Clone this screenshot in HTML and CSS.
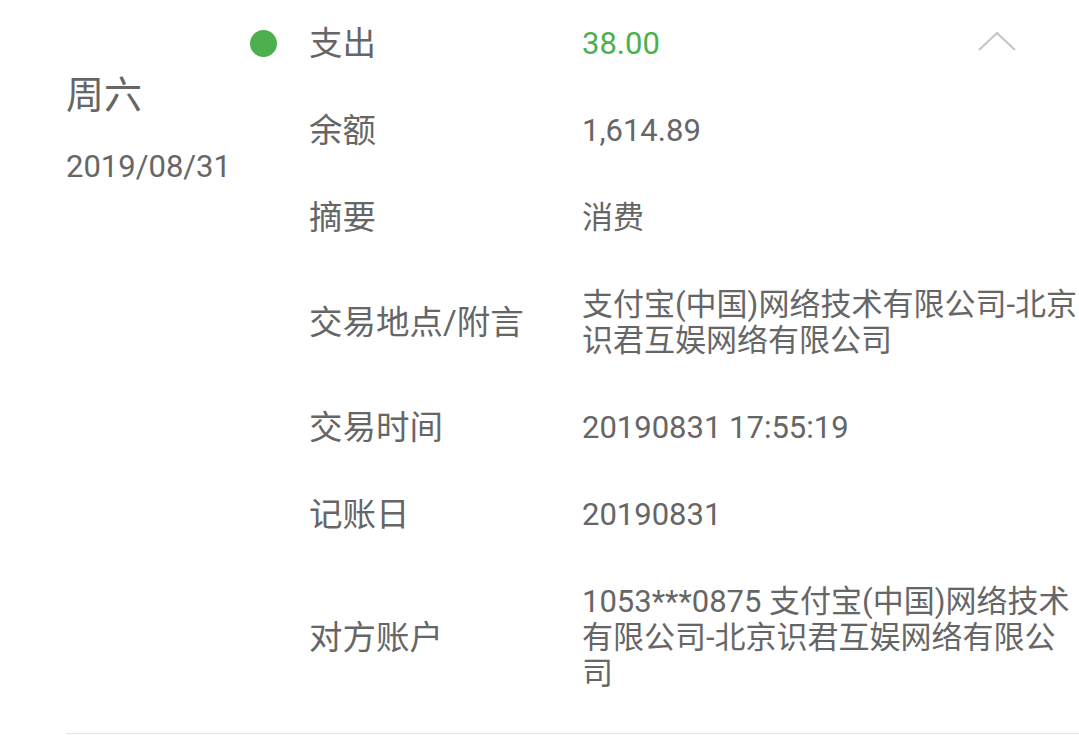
FILE: index.html
```html
<!DOCTYPE html>
<html lang="zh-CN">
<head>
  <meta charset="UTF-8">
  <meta name="viewport" content="width=device-width, initial-scale=1.0">
  <title>交易明细</title>
  <link rel="stylesheet" href="styles.css">
</head>
<body>

  <div class="day">
    <div class="date-col">
      <div class="weekday">周六</div>
      <div class="date">2019/08/31</div>
    </div>

    <div class="detail">
      <div class="row">
        <span class="dot"></span>
        <div class="label">支出</div>
        <div class="value amount">
          <span>38.00</span>
          <svg class="toggle" width="38" height="20" viewBox="0 0 38 20">
            <polyline points="1,19 19,2 37,19" fill="none" stroke="#c4c4c4" stroke-width="2"/>
          </svg>
        </div>
      </div>

      <div class="row">
        <span></span>
        <div class="label">余额</div>
        <div class="value">1,614.89</div>
      </div>

      <div class="row">
        <span></span>
        <div class="label">摘要</div>
        <div class="value">消费</div>
      </div>

      <div class="row">
        <span></span>
        <div class="label">交易地点/附言</div>
        <div class="value">支付宝(中国)网络技术有限公司-北京识君互娱网络有限公司</div>
      </div>

      <div class="row">
        <span></span>
        <div class="label">交易时间</div>
        <div class="value">20190831 17:55:19</div>
      </div>

      <div class="row">
        <span></span>
        <div class="label">记账日</div>
        <div class="value">20190831</div>
      </div>

      <div class="row">
        <span></span>
        <div class="label">对方账户</div>
        <div class="value">1053***0875 支付宝(中国)网络技术有限公司-北京识君互娱网络有限公司</div>
      </div>
    </div>
  </div>

</body>
</html>
```

FILE: styles.css
```css
html, body {
  overflow: hidden;
}

body {
  margin: 0;
  background-color: #fff;
  font-family: 'Roboto', 'Noto Sans CJK SC', sans-serif;
  color: #666;
}

.day {
  display: flex;
  margin-left: 66px;
  padding-bottom: 16px;
  border-bottom: 1px solid #e6e6e6;
}

.date-col {
  width: 184px;
  flex-shrink: 0;
  padding-top: 71px;
}

.weekday {
  font-size: 38px;
  line-height: 48px;
}

.date {
  margin-top: 28px;
  font-size: 31px;
  line-height: 40px;
}

.detail {
  flex: 1;
}

.row {
  display: grid;
  grid-template-columns: 59px 273px 1fr;
  align-items: center;
  padding: 25.5px 0;
}

.dot {
  width: 27px;
  height: 27px;
  border-radius: 50%;
  background-color: #4cb04f;
}

.label {
  font-size: 33.5px;
  line-height: 36px;
}

.value {
  font-size: 31px;
  line-height: 36px;
}

.amount {
  display: flex;
  align-items: center;
  color: #4cb04f;
}

.toggle {
  margin-left: auto;
  margin-right: 63px;
  margin-top: -6px;
}
```
